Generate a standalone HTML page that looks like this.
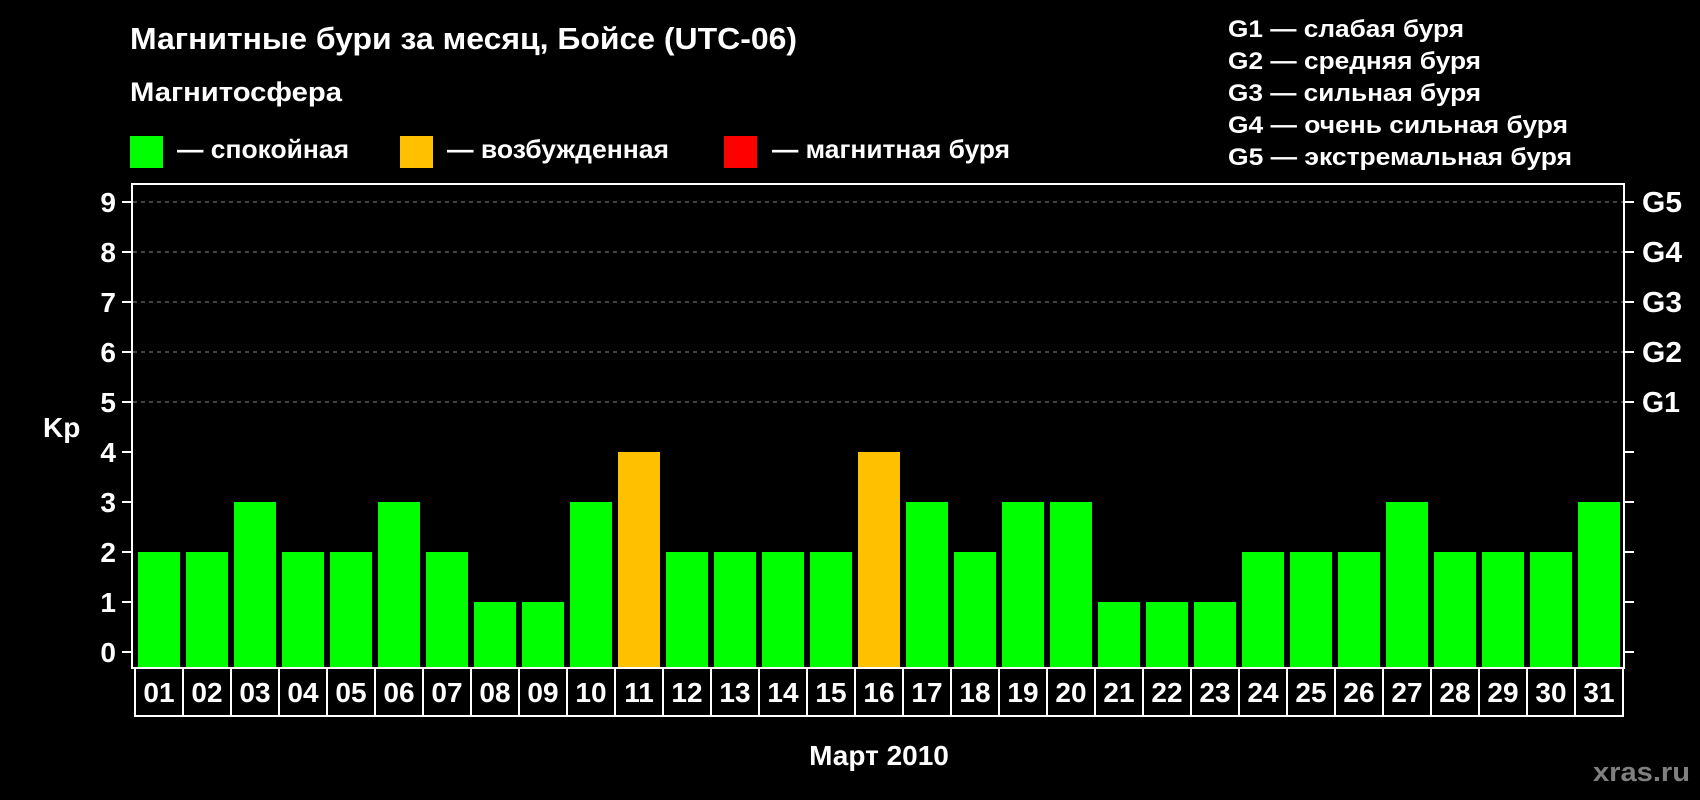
<!DOCTYPE html>
<html><head><meta charset="utf-8"><style>
html,body{margin:0;padding:0;background:#000;width:1700px;height:800px;overflow:hidden}
svg{display:block}
text{font-family:"Liberation Sans",sans-serif;font-weight:bold;fill:#fff}
</style></head><body>
<svg width="1700" height="800" viewBox="0 0 1700 800" xmlns="http://www.w3.org/2000/svg">
<rect width="1700" height="800" fill="#000"/>
<text x="130" y="49" font-size="31" textLength="667" lengthAdjust="spacingAndGlyphs">Магнитные бури за месяц, Бойсе (UTC-06)</text>
<text x="130" y="101" font-size="27" textLength="212" lengthAdjust="spacingAndGlyphs">Магнитосфера</text>
<rect x="130" y="136" width="33" height="32" fill="#00ff00"/>
<text x="177" y="158" font-size="26" textLength="172" lengthAdjust="spacingAndGlyphs">— спокойная</text>
<rect x="400" y="136" width="33" height="32" fill="#ffc000"/>
<text x="447" y="158" font-size="26" textLength="222" lengthAdjust="spacingAndGlyphs">— возбужденная</text>
<rect x="724" y="136" width="33" height="32" fill="#ff0000"/>
<text x="772" y="158" font-size="26" textLength="238" lengthAdjust="spacingAndGlyphs">— магнитная буря</text>
<g font-size="24">
<text x="1228" y="37" textLength="236" lengthAdjust="spacingAndGlyphs">G1 — слабая буря</text>
<text x="1228" y="69" textLength="253" lengthAdjust="spacingAndGlyphs">G2 — средняя буря</text>
<text x="1228" y="101" textLength="253" lengthAdjust="spacingAndGlyphs">G3 — сильная буря</text>
<text x="1228" y="133" textLength="340" lengthAdjust="spacingAndGlyphs">G4 — очень сильная буря</text>
<text x="1228" y="165" textLength="344" lengthAdjust="spacingAndGlyphs">G5 — экстремальная буря</text>
</g>
<g stroke="#888" stroke-width="1" stroke-dasharray="4,4">
<line x1="133" y1="202" x2="1624" y2="202"/>
<line x1="133" y1="252" x2="1624" y2="252"/>
<line x1="133" y1="302" x2="1624" y2="302"/>
<line x1="133" y1="352" x2="1624" y2="352"/>
<line x1="133" y1="402" x2="1624" y2="402"/>
</g>
<g fill="#00ff00">
<rect x="138" y="552" width="42" height="116"/>
<rect x="186" y="552" width="42" height="116"/>
<rect x="234" y="502" width="42" height="166"/>
<rect x="282" y="552" width="42" height="116"/>
<rect x="330" y="552" width="42" height="116"/>
<rect x="378" y="502" width="42" height="166"/>
<rect x="426" y="552" width="42" height="116"/>
<rect x="474" y="602" width="42" height="66"/>
<rect x="522" y="602" width="42" height="66"/>
<rect x="570" y="502" width="42" height="166"/>
<rect x="618" y="452" width="42" height="216" fill="#ffc000"/>
<rect x="666" y="552" width="42" height="116"/>
<rect x="714" y="552" width="42" height="116"/>
<rect x="762" y="552" width="42" height="116"/>
<rect x="810" y="552" width="42" height="116"/>
<rect x="858" y="452" width="42" height="216" fill="#ffc000"/>
<rect x="906" y="502" width="42" height="166"/>
<rect x="954" y="552" width="42" height="116"/>
<rect x="1002" y="502" width="42" height="166"/>
<rect x="1050" y="502" width="42" height="166"/>
<rect x="1098" y="602" width="42" height="66"/>
<rect x="1146" y="602" width="42" height="66"/>
<rect x="1194" y="602" width="42" height="66"/>
<rect x="1242" y="552" width="42" height="116"/>
<rect x="1290" y="552" width="42" height="116"/>
<rect x="1338" y="552" width="42" height="116"/>
<rect x="1386" y="502" width="42" height="166"/>
<rect x="1434" y="552" width="42" height="116"/>
<rect x="1482" y="552" width="42" height="116"/>
<rect x="1530" y="552" width="42" height="116"/>
<rect x="1578" y="502" width="42" height="166"/>
</g>
<rect x="132" y="184" width="1492" height="484" fill="none" stroke="#fff" stroke-width="2"/>
<g stroke="#fff" stroke-width="2">
<line x1="122" y1="202" x2="132" y2="202"/><line x1="122" y1="252" x2="132" y2="252"/>
<line x1="122" y1="302" x2="132" y2="302"/><line x1="122" y1="352" x2="132" y2="352"/>
<line x1="122" y1="402" x2="132" y2="402"/><line x1="122" y1="452" x2="132" y2="452"/>
<line x1="122" y1="502" x2="132" y2="502"/><line x1="122" y1="552" x2="132" y2="552"/>
<line x1="122" y1="602" x2="132" y2="602"/><line x1="122" y1="652" x2="132" y2="652"/>
<line x1="1624" y1="202" x2="1634" y2="202"/><line x1="1624" y1="252" x2="1634" y2="252"/>
<line x1="1624" y1="302" x2="1634" y2="302"/><line x1="1624" y1="352" x2="1634" y2="352"/>
<line x1="1624" y1="402" x2="1634" y2="402"/><line x1="1624" y1="452" x2="1634" y2="452"/>
<line x1="1624" y1="502" x2="1634" y2="502"/><line x1="1624" y1="552" x2="1634" y2="552"/>
<line x1="1624" y1="602" x2="1634" y2="602"/><line x1="1624" y1="652" x2="1634" y2="652"/>
</g>
<g font-size="28" text-anchor="end">
<text x="116" y="212">9</text><text x="116" y="262">8</text><text x="116" y="312">7</text>
<text x="116" y="362">6</text><text x="116" y="412">5</text><text x="116" y="462">4</text>
<text x="116" y="512">3</text><text x="116" y="562">2</text><text x="116" y="612">1</text>
<text x="116" y="662">0</text>
</g>
<text x="43" y="437" font-size="28">Kp</text>
<g font-size="29">
<text x="1642" y="212" textLength="40" lengthAdjust="spacingAndGlyphs">G5</text>
<text x="1642" y="262" textLength="40" lengthAdjust="spacingAndGlyphs">G4</text>
<text x="1642" y="312" textLength="40" lengthAdjust="spacingAndGlyphs">G3</text>
<text x="1642" y="362" textLength="40" lengthAdjust="spacingAndGlyphs">G2</text>
<text x="1642" y="412" textLength="38" lengthAdjust="spacingAndGlyphs">G1</text>
</g>
<g stroke="#fff" stroke-width="2" fill="none">
<line x1="135" y1="716" x2="1623" y2="716"/>
<path d="M135 669V717M183 669V717M231 669V717M279 669V717M327 669V717M375 669V717M423 669V717M471 669V717M519 669V717M567 669V717M615 669V717M663 669V717M711 669V717M759 669V717M807 669V717M855 669V717M903 669V717M951 669V717M999 669V717M1047 669V717M1095 669V717M1143 669V717M1191 669V717M1239 669V717M1287 669V717M1335 669V717M1383 669V717M1431 669V717M1479 669V717M1527 669V717M1575 669V717M1623 669V717"/>
</g>
<g font-size="28" text-anchor="middle">
<text x="159" y="702">01</text><text x="207" y="702">02</text><text x="255" y="702">03</text>
<text x="303" y="702">04</text><text x="351" y="702">05</text><text x="399" y="702">06</text>
<text x="447" y="702">07</text><text x="495" y="702">08</text><text x="543" y="702">09</text>
<text x="591" y="702">10</text><text x="639" y="702">11</text><text x="687" y="702">12</text>
<text x="735" y="702">13</text><text x="783" y="702">14</text><text x="831" y="702">15</text>
<text x="879" y="702">16</text><text x="927" y="702">17</text><text x="975" y="702">18</text>
<text x="1023" y="702">19</text><text x="1071" y="702">20</text><text x="1119" y="702">21</text>
<text x="1167" y="702">22</text><text x="1215" y="702">23</text><text x="1263" y="702">24</text>
<text x="1311" y="702">25</text><text x="1359" y="702">26</text><text x="1407" y="702">27</text>
<text x="1455" y="702">28</text><text x="1503" y="702">29</text><text x="1551" y="702">30</text>
<text x="1599" y="702">31</text>
</g>
<text x="879" y="765" font-size="28" text-anchor="middle">Март 2010</text>
<text x="1593" y="781" font-size="27" style="fill:#808080" textLength="97" lengthAdjust="spacingAndGlyphs">xras.ru</text>
</svg>
</body></html>
